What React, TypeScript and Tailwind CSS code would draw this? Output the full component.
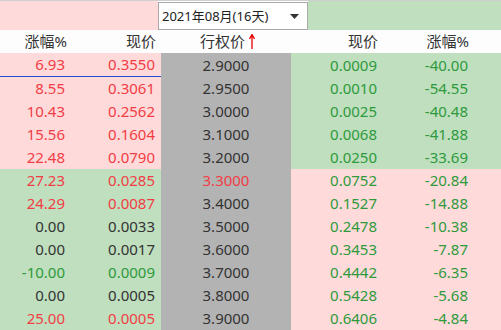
const PINK = "bg-[#ffdada]";
const GREEN = "bg-[#bfdfbf]";

type C = "r" | "g" | "d";

const rows: { chg: string; px: string; lc: C; strike: string; sr?: boolean; rpx: string; rchg: string; leftGreen: boolean }[] = [
  { chg: "6.93", px: "0.3550", lc: "r", strike: "2.9000", rpx: "0.0009", rchg: "-40.00", leftGreen: false },
  { chg: "8.55", px: "0.3061", lc: "r", strike: "2.9500", rpx: "0.0010", rchg: "-54.55", leftGreen: false },
  { chg: "10.43", px: "0.2562", lc: "r", strike: "3.0000", rpx: "0.0025", rchg: "-40.48", leftGreen: false },
  { chg: "15.56", px: "0.1604", lc: "r", strike: "3.1000", rpx: "0.0068", rchg: "-41.88", leftGreen: false },
  { chg: "22.48", px: "0.0790", lc: "r", strike: "3.2000", rpx: "0.0250", rchg: "-33.69", leftGreen: false },
  { chg: "27.23", px: "0.0285", lc: "r", strike: "3.3000", sr: true, rpx: "0.0752", rchg: "-20.84", leftGreen: true },
  { chg: "24.29", px: "0.0087", lc: "r", strike: "3.4000", rpx: "0.1527", rchg: "-14.88", leftGreen: true },
  { chg: "0.00", px: "0.0033", lc: "d", strike: "3.5000", rpx: "0.2478", rchg: "-10.38", leftGreen: true },
  { chg: "0.00", px: "0.0017", lc: "d", strike: "3.6000", rpx: "0.3453", rchg: "-7.87", leftGreen: true },
  { chg: "-10.00", px: "0.0009", lc: "g", strike: "3.7000", rpx: "0.4442", rchg: "-6.35", leftGreen: true },
  { chg: "0.00", px: "0.0005", lc: "d", strike: "3.8000", rpx: "0.5428", rchg: "-5.68", leftGreen: true },
  { chg: "25.00", px: "0.0005", lc: "r", strike: "3.9000", rpx: "0.6406", rchg: "-4.84", leftGreen: true },
];

const color = (c: C) =>
  c === "r" ? "text-[#f23d45]" : c === "g" ? "text-[#2e9a3c]" : "text-[#333333]";

export default function App() {
  return (
    <div
      className="w-[501px] h-[330px] overflow-hidden bg-white text-[15px] leading-none"
      style={{ fontFamily: '"Noto Sans", "Noto Sans CJK SC", sans-serif' }}
    >
      {/* period picker */}
      <div className="flex h-[30px] border-t border-[#cfcfcf]">
        <div className={`w-[158px] ${PINK}`} />
        <div className="w-[150px] h-[28px] mt-px border border-[#a9a9a9] bg-white flex items-center justify-between pl-[3px] pr-[8px] text-[13px] text-[#222]">
          <span>2021年08月(16天)</span>
          <svg width="9" height="5" viewBox="0 0 9 5">
            <path d="M0 0h9L4.5 5z" fill="#333" />
          </svg>
        </div>
        <div className={`flex-1 ${GREEN}`} />
      </div>

      {/* column headers */}
      <div className="flex h-[23px] items-center bg-[#fdfdfd] text-[#333]">
        <div className="w-[80px] text-right pr-[13px]">涨幅%</div>
        <div className="w-[81px] text-right pr-[5px]">现价</div>
        <div className="w-[130px] flex items-center justify-center gap-[4px] pl-[3px]">
          <span>行权价</span>
          <svg width="6" height="15" viewBox="0 0 6 15">
            <path d="M3 15V2M0.5 5L3 0.5 5.5 5" stroke="#e60000" strokeWidth="1.3" fill="none" />
          </svg>
        </div>
        <div className="w-[100px] text-right pr-[13px]">现价</div>
        <div className="flex-1 text-right pr-[32px]">涨幅%</div>
      </div>

      {rows.map((r, i) => (
        <div key={i} className={`flex ${i === 0 ? "h-[24px]" : "h-[23px]"}`}>
          <div
            className={`flex w-[161px] ${r.leftGreen ? GREEN : PINK} ${color(r.lc)} ${
              i === 0 ? "border-b border-[#1f4fd0]" : ""
            }`}
          >
            <div className="w-[80px] flex items-center justify-end pr-[15px]">{r.chg}</div>
            <div className="w-[81px] flex items-center justify-end pr-[6px]">{r.px}</div>
          </div>
          <div
            className={`w-[130px] flex items-center justify-center bg-[#b3b3b3] ${
              r.sr ? "text-[#f23d45]" : "text-[#333]"
            }`}
          >
            {r.strike}
          </div>
          <div className={`flex flex-1 text-[#2e9a3c] ${r.leftGreen ? PINK : GREEN}`}>
            <div className="w-[100px] flex items-center justify-end pr-[14px]">{r.rpx}</div>
            <div className="flex-1 flex items-center justify-end pr-[33px]">{r.rchg}</div>
          </div>
        </div>
      ))}
    </div>
  );
}
